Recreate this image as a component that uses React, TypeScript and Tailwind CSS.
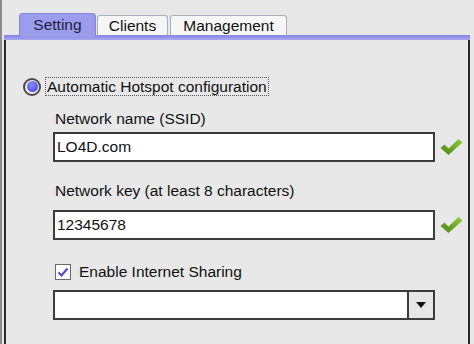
import React from "react";

function Check() {
  return (
    <svg width="23" height="18" viewBox="0 0 23 18" className="shrink-0">
      <defs>
        <linearGradient id="gck" x1="0" y1="1" x2="1" y2="0">
          <stop offset="0" stopColor="#4a8410" />
          <stop offset="1" stopColor="#92cc3e" />
        </linearGradient>
      </defs>
      <path d="M0.5 10 L4.5 6.5 L8.5 10.5 L18.5 1 L22.5 4.5 L8.5 17 Z" fill="url(#gck)" />
    </svg>
  );
}

export default function App() {
  return (
    <div
      className="w-[474px] h-[344px] bg-[#e8e8e8] flex overflow-hidden text-[15.5px] text-[#111]"
      style={{ fontFamily: '"Liberation Sans", Arial, sans-serif' }}
    >
      <div className="w-[2px] h-full bg-[#8a8a8a] shrink-0" />
      <div className="w-[2px] shrink-0" />
      <div className="w-[466px] flex flex-col shrink-0">
        {/* tabs */}
        <div className="h-[35px] flex items-end pl-[15px] shrink-0">
          <div className="relative z-10 h-[24px] w-[77px] -mb-[2px] rounded-t-[4px] border border-b-0 border-[#8585dc] bg-[#9c9cec] flex items-center justify-center text-[#1c1c40] leading-none pb-[2px]">
            Setting
          </div>
          <div className="ml-[1px] h-[20px] w-[71px] rounded-t-[3px] border border-b-0 border-[#a8b0be] bg-[#f6f6f6] flex items-center justify-center leading-none">
            Clients
          </div>
          <div className="ml-[2px] h-[20px] w-[117px] rounded-t-[3px] border border-b-0 border-[#a8b0be] bg-[#f6f6f6] flex items-center justify-center leading-none">
            Management
          </div>
        </div>
        <div className="h-[5px] shrink-0 bg-gradient-to-b from-[#8282e2] to-[#a9a9f2]" />
        {/* panel */}
        <div className="flex-1 border-l-2 border-r-2 border-[#2a2a2a] flex flex-col">
          <div className="mt-[37px] h-[19px] flex items-center pl-[17px]">
            <div className="w-[18px] h-[18px] rounded-full border-2 border-[#4a4a4a] bg-[#f0f0f0] flex items-center justify-center">
              <div className="w-[11px] h-[11px] rounded-full bg-[radial-gradient(circle_at_40%_35%,#8c8cff,#3b3be6)]" />
            </div>
            <div className="ml-[4px] h-[19px] px-[1px] border border-dotted border-[#555] flex items-center leading-none">
              Automatic Hotspot configuration
            </div>
          </div>
          <div className="pl-[47px] flex flex-col">
            <div className="mt-[14px] h-[18px] leading-[18px] pl-[2px]">Network name (SSID)</div>
            <div className="mt-[4px] flex items-center">
              <div className="w-[382px] h-[30px] border-2 border-[#3c3c3c] bg-white flex items-center pl-[2px] leading-none">
                LO4D.com
              </div>
              <div className="ml-[5px]">
                <Check />
              </div>
            </div>
            <div className="mt-[20px] h-[18px] leading-[18px] pl-[2px]">Network key (at least 8 characters)</div>
            <div className="mt-[10px] flex items-center">
              <div className="w-[382px] h-[30px] border-2 border-[#3c3c3c] bg-white flex items-center pl-[2px] leading-none">
                12345678
              </div>
              <div className="ml-[5px]">
                <Check />
              </div>
            </div>
            <div className="mt-[24px] h-[16px] flex items-center pl-[2px]">
              <div className="w-[16px] h-[16px] border border-[#6a6a6a] bg-white flex items-center justify-center">
                <svg width="12" height="11" viewBox="0 0 12 11">
                  <path d="M1.5 5.5 L4.5 8.5 L10.5 1.5" fill="none" stroke="#5a48d2" strokeWidth="2.2" />
                </svg>
              </div>
              <div className="ml-[8px] leading-none">Enable Internet Sharing</div>
            </div>
            <div className="mt-[10px] w-[382px] h-[30px] border-2 border-[#3c3c3c] bg-white flex">
              <div className="flex-1" />
              <div className="w-[26px] h-full border-l-2 border-[#3c3c3c] bg-[#e6e6e6] flex items-center justify-center">
                <svg width="10" height="6" viewBox="0 0 10 6">
                  <path d="M0 0 L10 0 L5 6 Z" fill="#111" />
                </svg>
              </div>
            </div>
          </div>
        </div>
      </div>
    </div>
  );
}
